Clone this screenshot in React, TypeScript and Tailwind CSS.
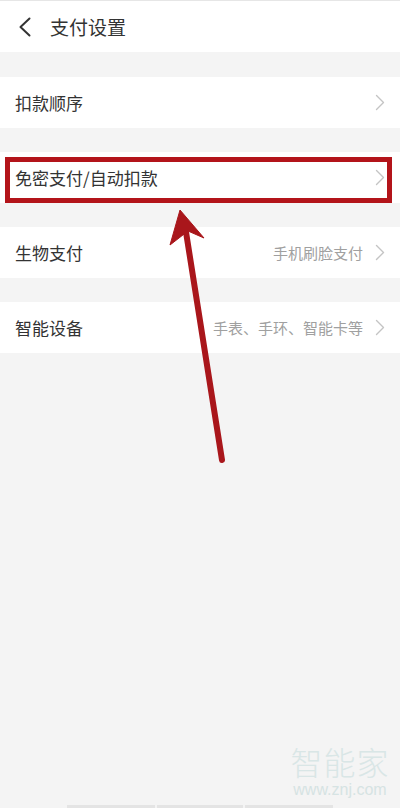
import React from "react";

const font = { fontFamily: '"Noto Sans CJK SC", "Noto Sans", sans-serif' };

function Chevron() {
  return (
    <svg width="10" height="17" viewBox="0 0 10 17" className="shrink-0">
      <path d="M1.5 1.5 L8.5 8.5 L1.5 15.5" fill="none" stroke="#c4c4c4" strokeWidth="1.4" strokeLinecap="round" strokeLinejoin="round" />
    </svg>
  );
}

function Row({ label, value, top }: { label: string; value?: string; top: string }) {
  return (
    <div className={`${top} h-[51px] bg-white flex items-center pl-[15px] pr-[15px]`}>
      <span className="text-[17px] text-[#333333] leading-none">{label}</span>
      <div className="ml-auto flex items-center gap-[12px]">
        {value && <span className="text-[15px] text-[#a0a0a0] leading-none">{value}</span>}
        <Chevron />
      </div>
    </div>
  );
}

export default function App() {
  return (
    <div className="relative w-[400px] h-[808px] bg-[#f4f4f4] overflow-hidden" style={font}>
      <div className="h-[1px] bg-[#e6e6e6]" />
      <div className="h-[51px] bg-white flex items-center pl-[18px]">
        <svg width="14" height="20" viewBox="0 0 14 20">
          <path d="M11.5 1.5 L2.5 10 L11.5 18.5" fill="none" stroke="#333" strokeWidth="2" strokeLinecap="round" strokeLinejoin="round" />
        </svg>
        <span className="ml-[18px] text-[19px] text-[#333333] leading-none">支付设置</span>
      </div>

      <Row top="mt-[25px]" label="扣款顺序" />
      <Row top="mt-[24px]" label="免密支付/自动扣款" />
      <Row top="mt-[24px]" label="生物支付" value="手机刷脸支付" />
      <Row top="mt-[24px]" label="智能设备" value="手表、手环、智能卡等" />

      {/* annotation box */}
      <div className="absolute left-[5px] top-[157px] w-[387px] h-[46px] border-[5px] border-[#b3141a]" />

      {/* annotation arrow */}
      <svg className="absolute left-0 top-0" width="400" height="808" viewBox="0 0 400 808">
        <line x1="186" y1="232" x2="222" y2="460" stroke="#a9161b" strokeWidth="6" strokeLinecap="round" />
        <path d="M180 210 L204 238 L188 231 L170 245 Z" fill="#a9161b" stroke="#a9161b" strokeWidth="1" strokeLinejoin="round" />
      </svg>

      {/* watermark */}
      <div className="absolute left-[288px] top-[745px] w-[104px] flex flex-col items-center">
        <span className="h-[32px] text-[32px] leading-[32px] tracking-[1px] text-[#d9e6e6] font-light">智能家</span>
        <span className="mt-[4px] h-[18px] text-[16px] leading-[18px] text-[#d6e3e3]" style={{ fontFamily: '"Liberation Sans", sans-serif' }}>
          www.znj.com
        </span>
      </div>

      {/* bottom bar */}
      <div className="absolute left-[67px] top-[805px] flex gap-[2px]">
        <div className="w-[88px] h-[3px] bg-[#e4e4e4]" />
        <div className="w-[86px] h-[3px] bg-[#e4e4e4]" />
        <div className="w-[88px] h-[3px] bg-[#e4e4e4]" />
      </div>
    </div>
  );
}
